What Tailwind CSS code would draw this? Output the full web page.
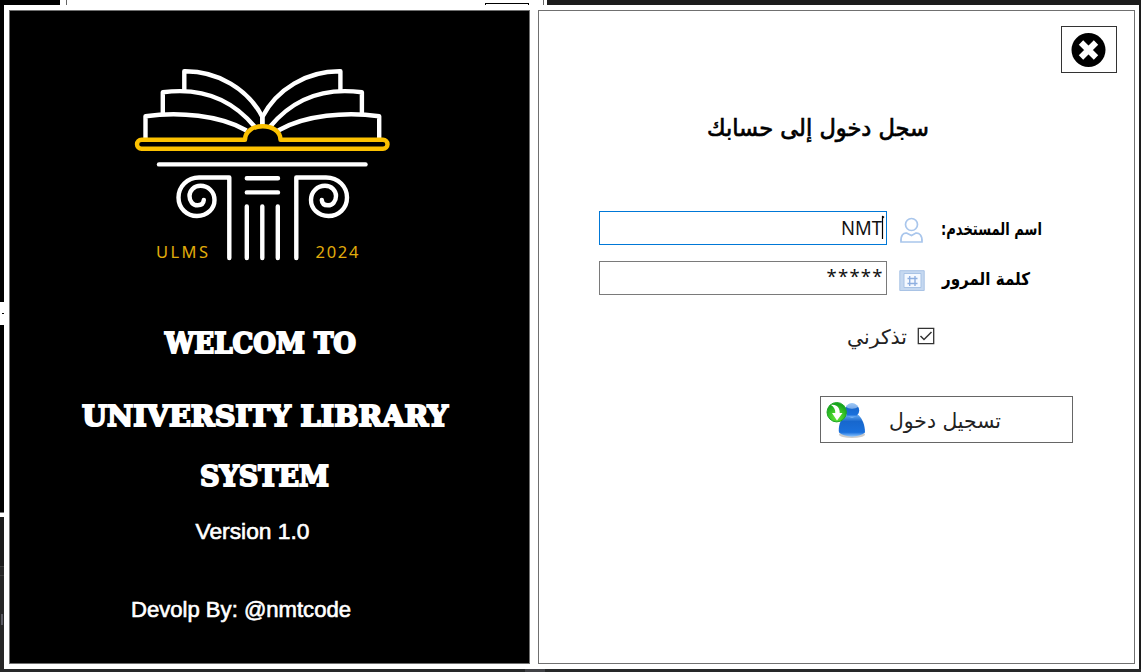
<!DOCTYPE html>
<html lang="ar">
<head>
<meta charset="utf-8">
<title>ULMS</title>
<script src="https://cdn.jsdelivr.net/npm/@tailwindcss/browser@4"></script>
</head>
<body class="bg-[#1c1c1c] w-[1141px] h-[672px] overflow-hidden">
<div class="relative w-[1141px] h-[672px] pl-1 pt-[5px]">
  <!-- windows behind the dialog -->
  <div class="absolute left-0 top-0 w-[60px] h-[5px] bg-black"></div>
  <div class="absolute left-[60px] top-0 w-[487px] h-[5px] bg-white"></div>
  <div class="absolute left-[66px] top-0 w-px h-[5px] bg-[#666]"></div>
  <div class="absolute left-[485px] top-[3px] w-[44px] h-[2px] border border-b-0 border-black"></div>
  <div class="absolute left-[543px] top-0 w-px h-[5px] bg-[#666]"></div>
  <div class="absolute left-0 top-[5px] w-1 h-[507px] bg-black"></div>
  <div class="absolute left-0 top-[302px] w-1 h-[23px] bg-white"></div>
  <div class="absolute left-[2px] top-[313px] w-[2px] h-px bg-black"></div>
  <div class="absolute left-0 top-[512px] w-1 h-[5px] bg-white border-t border-[#777]"></div>
  <div class="absolute left-0 top-[566px] w-1 h-[106px] bg-[#272727] border-t border-[#3c3c3c]"></div>
  <div class="absolute left-0 top-[575px] w-1 h-px bg-[#3c3c3c]"></div>
  <div class="absolute left-[1px] top-[614px] w-[2px] h-[11px] bg-[#5c5c64]"></div>
  <div class="absolute left-0 top-[669px] w-[1141px] h-[3px] bg-[#262829]"></div>
  <div class="absolute left-[525px] top-[669px] w-[20px] h-[3px] bg-[#414246]"></div>

  <main class="relative w-[1135px] h-[664px] bg-white flex gap-2 p-[5px] pr-1">
    <section dir="ltr" class="w-[521px] h-[654px] bg-black border border-[#707070] text-white flex flex-col items-start whitespace-nowrap">
      <svg class="ml-[110px] mt-[44px] w-[290px] h-[215px] shrink-0" viewBox="120 55 290 215" fill="none" stroke-width="4.4" stroke-linecap="round" stroke-linejoin="round">
        <g stroke="#fff">
          <g stroke-linecap="butt">
            <path d="M145.500 138V116.300C178 111.500 220 115 246.500 130.500"/>
            <path d="M162.800 114.500V92.300C198 87.500 230 97 254.500 126.500"/>
            <path d="M184.300 90V71.300C218 71 248 89 262.400 117V125"/>
          </g>
          <g stroke-linecap="butt" transform="matrix(-1 0 0 1 524.700 0)">
            <path d="M145.500 138V116.300C178 111.500 220 115 246.500 130.500"/>
            <path d="M162.800 114.500V92.300C198 87.500 230 97 254.500 126.500"/>
            <path d="M184.300 90V71.300C218 71 248 89 262.400 117V125"/>
          </g>
        </g>
        <path stroke="#fcc100" d="M141.500 139.700H245C245 121.700 280.500 121.700 280.500 139.700H383A4.500 4.500 0 0 1 383 148.700H141.500A4.500 4.500 0 0 1 141.500 139.700Z"/>
        <g stroke="#fff">
          <path d="M159 164.400H365.500"/>
          <path d="M229.300 258V177.500H199C187 177.500 178.500 187 178.500 197.500C178.500 208.500 187 216 197 216C207.500 216 214.500 208.500 214.500 200C214.500 191.500 208 185.800 200.500 185.800C194 185.800 189.500 190.500 189.500 196C189.500 201.500 193 205.300 197.500 205.300C201 205.300 203.500 203.500 203.800 200"/>
          <path d="M296.300 258V177.500H326C338.500 177.500 347 187 347 197.500C347 208.500 338.500 216 328.500 216C318 216 311 208.500 311 200C311 191.500 317.500 185.800 325 185.800C331.500 185.800 336 190.500 336 196C336 201.500 332.500 205.300 328 205.300C324.500 205.300 322 203.500 321.800 200"/>
          <path d="M246.800 178.300H278M246.800 192.400H278M246.800 206.500V258M262.300 206.500V258M277.800 206.500V258"/>
        </g>
        <g fill="#e0ac0b" font-family="Noto Sans, sans-serif" font-size="16.500">
          <text x="156" y="258" textLength="52">ULMS</text>
          <text x="315.500" y="258" textLength="43">2024</text>
        </g>
      </svg>
      <svg class="mt-[50px] ml-[60px] w-[400px] h-[180px] shrink-0" viewBox="70 320 400 180" fill="#fff" stroke="#fff" stroke-width="2" font-family="DejaVu Serif, serif" font-weight="700" font-size="28.500">
        <text x="165" y="353" textLength="191" lengthAdjust="spacingAndGlyphs">WELCOM TO</text>
        <text x="82" y="425.500" textLength="366" lengthAdjust="spacingAndGlyphs">UNIVERSITY LIBRARY</text>
        <text x="200" y="485.500" textLength="129" lengthAdjust="spacingAndGlyphs">SYSTEM</text>
      </svg>
      <svg class="ml-[110px] mt-[10px] w-[260px] h-[120px] shrink-0" viewBox="120 510 260 120" fill="#fff" stroke="#fff" stroke-width=".6" font-family="Liberation Sans, sans-serif" font-size="21.500">
        <text x="195.500" y="539" textLength="114" lengthAdjust="spacingAndGlyphs">Version 1.0</text>
        <text x="131" y="616.500" textLength="220" lengthAdjust="spacingAndGlyphs">Devolp By: @nmtcode</text>
      </svg>
    </section>

    <section dir="ltr" class="w-[597px] h-[654px] bg-white border border-[#707070] text-black flex flex-col">
      <button class="ml-[522px] mt-[15px] w-[56px] h-[47px] border-[1.5px] border-[#333] flex items-center justify-center shrink-0">
        <svg class="w-[36px] h-[36px]" viewBox="0 0 36 36"><circle cx="17.500" cy="18" r="17" fill="#000"/><path d="M10 10.500l15 15M25 10.500l-15 15" stroke="#fff" stroke-width="6.200"/></svg>
      </button>
      <svg class="ml-[151px] mt-[27px] w-[260px] h-[60px] shrink-0" viewBox="690 100 260 60">
        <text x="707" y="136" textLength="222" lengthAdjust="spacingAndGlyphs" font-family="DejaVu Sans, sans-serif" font-size="23.500" stroke="#000" stroke-width=".7">سجل دخول إلى حسابك</text>
      </svg>
      <div class="mt-[51px] ml-[60px] flex h-[34px] items-center shrink-0">
        <div class="w-[288px] h-[34px] border-[1.5px] border-[#0078d7] flex justify-end">
          <svg class="w-[60px] h-[32px]" viewBox="826 212 60 32"><text x="841" y="235" textLength="41" lengthAdjust="spacingAndGlyphs" font-family="Noto Sans, sans-serif" font-size="20.500" fill="#111">NMT</text><path d="M882.500 216V239" stroke="#000" stroke-width="1.200"/><path d="M882.500 215.500l2 1.500-2 2z"/></svg>
        </div>
        <svg class="ml-[12px] mt-[3px] w-[26px] h-[28px]" viewBox="899 217 26 28" fill="none" stroke="#a9c6ec" stroke-width="1.700"><circle cx="911.500" cy="225.500" r="6"/><path d="M901 243C900.500 236 903.500 233.500 907 234.200L911.500 236.500L915.500 234.200C919 233.500 922.500 236 922 243Z"/></svg>
        <svg class="ml-[8px] w-[130px] h-[34px]" viewBox="933 211 130 34"><text x="941" y="235" textLength="101" lengthAdjust="spacingAndGlyphs" direction="rtl" text-anchor="end" font-family="DejaVu Sans, sans-serif" font-weight="700" font-size="17.500">اسم المستخدم:</text></svg>
      </div>
      <div class="mt-[16px] ml-[60px] flex h-[34px] items-center shrink-0">
        <div class="w-[288px] h-[34px] border-[1.5px] border-[#7a7a7a] flex justify-end">
          <svg class="w-[60px] h-[32px]" viewBox="826 262 60 32"><text x="826.500" y="282.500" textLength="56" lengthAdjust="spacing" font-family="Noto Sans, sans-serif" font-size="18.500" fill="#111">*****</text></svg>
        </div>
        <svg class="ml-[12px] mt-[6px] w-[26px] h-[24px]" viewBox="898 269 26 24" fill="none"><path d="M898.800 270.700h24.400v19.800h-24.400z" fill="#c5d8f0" stroke="#a9c3e5"/><path d="M903 273.500h17v14h-17z" fill="#f5f9ff" stroke="#a9c3e5"/><path d="M908.700 276v10M914 276v10M906.500 278.500h10M906.500 283.500h10" stroke="#8eafe0" stroke-width="1.400"/></svg>
        <svg class="ml-[12px] w-[120px] h-[34px]" viewBox="937 261 120 34"><text x="942" y="285" textLength="88" lengthAdjust="spacingAndGlyphs" font-family="DejaVu Sans, sans-serif" font-weight="700" font-size="17.500">كلمة المرور</text></svg>
      </div>
      <div class="mt-[25px] ml-[301px] flex h-[32px] shrink-0">
        <svg class="w-[74px] h-[32px]" viewBox="840 320 74 32"><text x="847" y="344" textLength="60" lengthAdjust="spacingAndGlyphs" font-family="DejaVu Sans, sans-serif" font-size="20" fill="#222">تذكرني</text></svg>
        <svg class="ml-[3px] mt-[7px] w-[18px] h-[18px]" viewBox="0 0 18 18" fill="none" stroke="#333" stroke-width="1.300"><path d="M1.300 1.300h15.400v15.400H1.300z"/><path d="M3.500 9l3.500 3.500L14.500 5" stroke-width="1.500"/></svg>
      </div>
      <button class="mt-[44px] ml-[281px] w-[253px] h-[47px] border-[1.5px] border-[#666] flex items-center shrink-0">
        <svg class="ml-[4px] w-[42px] h-[38px]" viewBox="825 400.500 42 38">
          <defs>
            <linearGradient id="b" x1="0" y1="0" x2="0" y2="1"><stop offset="0" stop-color="#65a9f0"/><stop offset=".3" stop-color="#1767cd"/><stop offset=".8" stop-color="#1a70dc"/><stop offset="1" stop-color="#8cc5ff"/></linearGradient>
            <radialGradient id="g" cx=".5" cy=".75" r=".65"><stop offset="0" stop-color="#66ed36"/><stop offset="1" stop-color="#17a51d"/></radialGradient>
          </defs>
          <ellipse cx="852" cy="434" rx="13" ry="3.500" fill="#aaa" opacity=".6"/>
          <path d="M845 414.500C840 419 838 427 839 432C845 437.500 859 437.500 865 432C865 424 862 418 858.500 414.500Z" fill="url(#b)"/>
          <circle cx="852" cy="410" r="7.200" fill="url(#b)"/>
          <path d="M845.500 406C848 402 856 402 858.500 406C855 409 849 409 845.500 406Z" fill="#c4defb" opacity=".6"/>
          <circle cx="836.700" cy="411.700" r="9.700" fill="url(#g)" stroke="#20a727"/>
          <path d="M831 404.500C837 403.500 840 408 839.700 412.500H842.500L837 420L832 412.500H835.300C835.500 409 834 406.500 831 404.500Z" fill="#fff"/>
        </svg>
        <svg class="ml-[16px] w-[130px] h-[42px]" viewBox="883 399 130 42"><text x="889" y="428" textLength="112" lengthAdjust="spacingAndGlyphs" font-family="DejaVu Sans, sans-serif" font-size="20.500" fill="#222">تسجيل دخول</text></svg>
      </button>
    </section>
  </main>
</div>
</body>
</html>
